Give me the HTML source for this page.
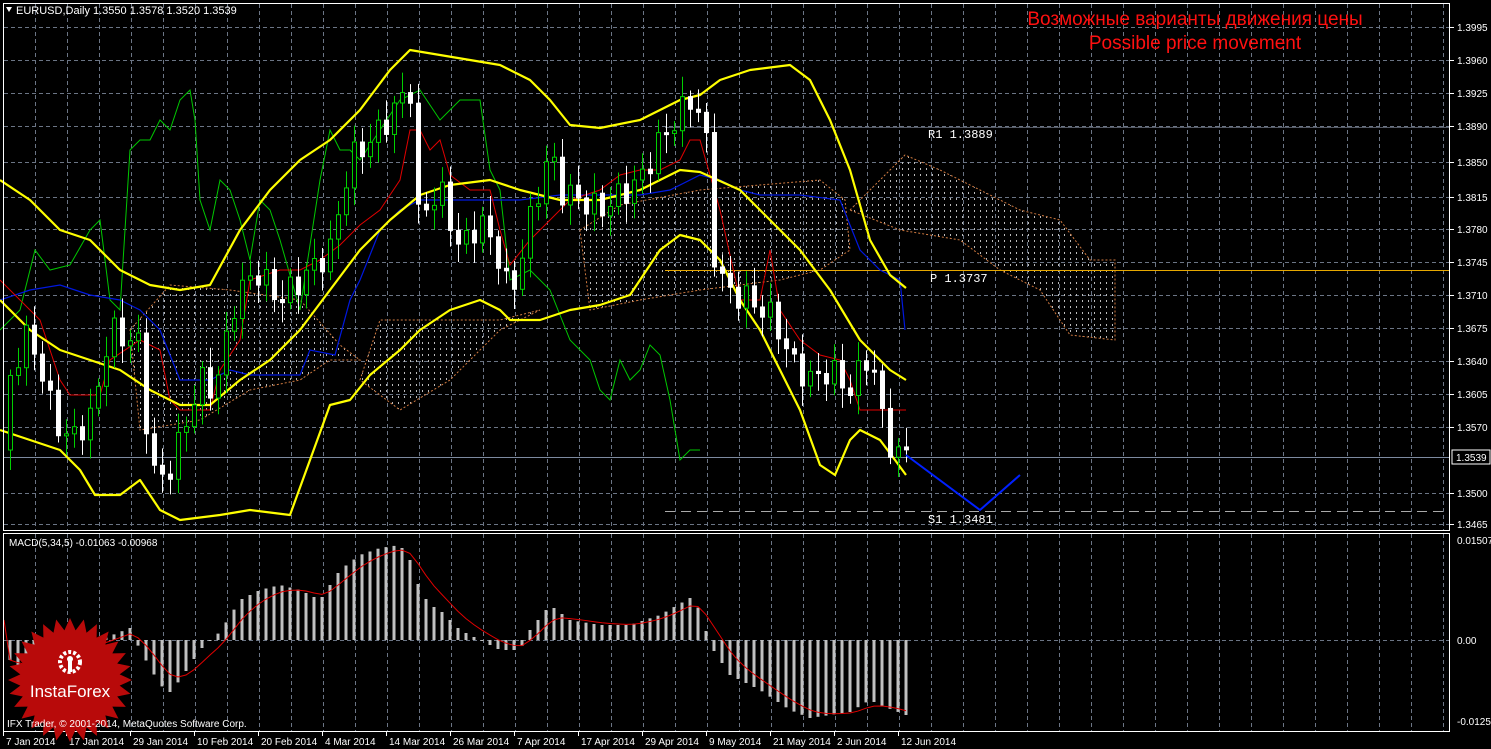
<!DOCTYPE html><html><head><meta charset="utf-8"><style>
html,body{margin:0;padding:0;background:#000;width:1491px;height:749px;overflow:hidden}
svg{display:block}
text{font-family:"Liberation Sans",sans-serif}
</style></head><body>
<svg id="s" width="1491" height="749" xmlns="http://www.w3.org/2000/svg">
<defs>
<pattern id="cl" width="6" height="6" patternUnits="userSpaceOnUse"><rect x="2" y="0" width="1" height="2" fill="#bbb"/></pattern>
</defs>
<rect width="1491" height="749" fill="#000"/>
<g id="grid"></g>
<g id="cloud"></g>
<g id="lines"></g>
<g id="candles"></g>
<g id="macd"></g>
<rect x="3.5" y="3.5" width="1446" height="527" fill="none" stroke="#fff"/>
<rect x="3.5" y="533.5" width="1446" height="198" fill="none" stroke="#fff"/>
<g id="ax"></g>
<polygon points="6,7 12,7 9,12" fill="#fff"/>
<text x="16" y="14" font-size="11" fill="#fff">EURUSD,Daily  1.3550 1.3578 1.3520 1.3539</text>
<text x="1195" y="25" font-size="19" fill="#ff1010" text-anchor="middle">Возможные варианты движения цены</text>
<text x="1195" y="49" font-size="19" fill="#ff1010" text-anchor="middle">Possible price movement</text>
<text x="928" y="138" font-size="12" fill="#fff" style="font-family:'Liberation Mono',monospace">R1 1.3889</text>
<text x="930" y="282" font-size="12" fill="#fff" style="font-family:'Liberation Mono',monospace">P 1.3737</text>
<text x="928" y="523" font-size="12" fill="#fff" style="font-family:'Liberation Mono',monospace">S1 1.3481</text>
<text x="9" y="546" font-size="10" fill="#fff">MACD(5,34,5) -0.01063 -0.00968</text>
<g id="logo"></g>
<text x="7" y="727" font-size="10" fill="#fff">IFX Trader, © 2001-2014, MetaQuotes Software Corp.</text>
</svg>
<script>
var NS="http://www.w3.org/2000/svg";
function el(p,t,a,tx){var e=document.createElementNS(NS,t);for(var k in a)e.setAttribute(k,a[k]);if(tx)e.textContent=tx;document.getElementById(p).appendChild(e);return e;}
function interp(pts,x){for(var i=0;i<pts.length-1;i++){if(x>=pts[i][0]&&x<=pts[i+1][0]){var t=(x-pts[i][0])/(pts[i+1][0]-pts[i][0]);return pts[i][1]+t*(pts[i+1][1]-pts[i][1]);}}return pts[pts.length-1][1];}
function pl(p,pts,c,w,extra){var a={points:pts.map(function(q){return q.join(',')}).join(' '),fill:'none',stroke:c,'stroke-width':w};for(var k in extra)a[k]=extra[k];el(p,'polyline',a);}
for(var x=35;x<1450;x+=32){el('grid','line',{x1:x+.5,y1:4,x2:x+.5,y2:530,stroke:'#6b7585','stroke-dasharray':'4,3'});el('grid','line',{x1:x+.5,y1:534,x2:x+.5,y2:731,stroke:'#6b7585','stroke-dasharray':'4,3'});}
var labs=[["1.3995",27],["1.3960",60],["1.3925",93],["1.3890",126],["1.3850",162],["1.3815",197],["1.3780",229],["1.3745",262],["1.3710",295],["1.3675",328],["1.3640",361],["1.3605",394],["1.3570",427],["1.3500",493],["1.3465",524]];
labs.forEach(function(l){el('grid','line',{x1:4,y1:l[1]+.5,x2:1450,y2:l[1]+.5,stroke:'#6b7585','stroke-dasharray':'4,3'});el('ax','line',{x1:1450,y1:l[1]+.5,x2:1454,y2:l[1]+.5,stroke:'#fff'});el('ax','text',{x:1457,y:l[1]+4,'font-size':10,fill:'#fff'},l[0]);});
el('grid','line',{x1:4,y1:640.5,x2:1450,y2:640.5,stroke:'#6b7585','stroke-dasharray':'4,3'});
[["0.01507",540],["0.00",640],["-0.01252",721]].forEach(function(l){el('ax','text',{x:1457,y:l[1]+4,'font-size':10,fill:'#fff'},l[0]);});
el('ax','rect',{x:1452,y:450,width:38,height:14,fill:'#000',stroke:'#fff'});
el('ax','text',{x:1456,y:461,'font-size':10,fill:'#fff'},"1.3539");
var dates=[["7 Jan 2014",3],["17 Jan 2014",66],["29 Jan 2014",130],["10 Feb 2014",194],["20 Feb 2014",258],["4 Mar 2014",322],["14 Mar 2014",386],["26 Mar 2014",450],["7 Apr 2014",514],["17 Apr 2014",578],["29 Apr 2014",642],["9 May 2014",706],["21 May 2014",770],["2 Jun 2014",834],["12 Jun 2014",898]];
dates.forEach(function(d){el('ax','line',{x1:d[1]+.5,y1:731,x2:d[1]+.5,y2:736,stroke:'#fff'});el('ax','text',{x:d[1]+3,y:745,'font-size':10,fill:'#fff'},d[0]);});
el('lines','line',{x1:4,y1:457.5,x2:1450,y2:457.5,stroke:'#7d8aa0'});
el('lines','line',{x1:665,y1:127.5,x2:1450,y2:127.5,stroke:'#555a66'});
el('lines','line',{x1:665,y1:270.5,x2:1450,y2:270.5,stroke:'#e6a800'});
el('lines','line',{x1:665,y1:511.5,x2:1450,y2:511.5,stroke:'#aaa','stroke-dasharray':'10,6'});
var clouds=[[[130,330],[170,285],[230,290],[300,300],[340,345],[360,360],[330,360],[300,380],[250,390],[200,420],[140,430]],
[[360,380],[380,320],[500,320],[540,310],[500,330],[450,380],[400,410]],
[[580,230],[620,205],[700,190],[760,185],[820,180],[845,200],[850,250],[820,270],[780,280],[700,290],[640,300],[590,310]],
[[850,210],[880,180],[905,155],[940,170],[980,190],[1020,210],[1060,220],[1090,260],[1115,260],[1115,340],[1070,335],[1040,290],[1000,270],[960,240],[900,230]]];
clouds.forEach(function(c){el('cloud','polygon',{points:c.map(function(q){return q.join(',')}).join(' '),fill:'url(#cl)',stroke:'#d07a40','stroke-dasharray':'2,2'});});
var green=[[0,330],[20,310],[35,250],[50,270],[70,265],[90,230],[100,220],[110,300],[120,310],[130,150],[140,140],[150,140],[160,120],[170,130],[180,100],[190,90],[195,120],[200,200],[210,230],[220,180],[230,190],[240,220],[250,260],[260,200],[270,210],[280,240],[300,310],[320,180],[330,130],[340,150],[350,150],[360,160],[380,130],[400,100],[420,90],[440,120],[460,100],[480,100],[490,170],[500,190],[510,280],[530,270],[550,290],[570,340],[590,360],[600,390],[610,400],[620,360],[630,380],[640,370],[650,345],[660,355],[670,400],[680,460],[690,450],[700,450]];
pl('lines',green,'#00c800',1);
var blue=[[0,300],[30,290],[60,285],[90,295],[120,300],[140,310],[160,330],[180,380],[210,380],[230,370],[250,375],[300,375],[310,350],[335,355],[350,300],[360,280],[380,230],[390,220],[400,210],[420,200],[480,200],[520,200],[560,195],[600,195],[640,195],[670,190],[700,175],[720,180],[740,190],[760,195],[800,195],[840,200],[860,250],[880,270],[900,280],[905,330]];
pl('lines',blue,'#0018e0',1.2);
var red=[[0,280],[20,300],[40,320],[60,380],[70,395],[100,395],[110,360],[140,340],[160,350],[170,400],[180,410],[210,410],[220,370],[240,340],[250,280],[280,270],[300,270],[320,260],[340,245],[360,225],[380,210],[400,180],[410,130],[420,130],[430,150],[440,140],[450,175],[470,190],[490,190],[500,230],[510,265],[530,240],[550,220],[570,200],[600,190],[620,175],[640,170],[660,170],[680,160],[690,140],[700,140],[720,210],[740,300],[760,300],[770,250],[780,310],[800,340],[820,355],[840,360],[850,380],[860,410],[880,410],[906,410]];
pl('lines',red,'#e00000',1);
var close=[[8,380],[30,330],[45,390],[65,440],[90,420],[110,330],[140,345],[150,470],[165,480],[180,440],[200,380],[215,390],[235,300],[255,270],[280,300],[300,280],[330,250],[350,160],[380,130],[400,100],[410,90],[415,220],[440,190],[460,250],[480,220],[500,260],[510,300],[530,220],[550,150],[560,190],[600,210],[640,180],[660,140],[690,100],[705,120],[710,240],[725,290],[750,300],[775,320],[790,360],[810,380],[830,370],[850,390],[870,350],[880,410],[895,460],[906,450]];
var prev=interp(close,2);
for(var i=0;i<113;i++){var cx=10+i*8;var c=interp(close,cx)+Math.sin(i*2.3)*14;var o=prev;prev=c;var hi=Math.min(o,c)-6-Math.abs(Math.sin(i*1.7))*14;var lo=Math.max(o,c)+6+Math.abs(Math.cos(i*1.3))*14;
 var up=c<o;el('candles','line',{x1:cx+.5,y1:hi,x2:cx+.5,y2:lo,stroke:up?'#00d000':'#fff'});
 var t=Math.min(o,c),h=Math.max(2,Math.abs(o-c));
 el('candles','rect',{x:cx-1.5,y:t,width:4,height:h,fill:up?'#000':'#fff',stroke:up?'#00d000':'#fff','stroke-width':1});}
var up=[[0,180],[30,200],[60,230],[90,240],[120,270],[150,285],[180,290],[210,285],[240,230],[270,190],[300,160],[330,140],[360,110],[390,70],[410,50],[440,55],[470,60],[500,65],[530,80],[550,100],[570,125],[600,128],[640,120],[680,100],[700,95],[720,80],[750,70],[790,65],[810,80],[830,120],[850,170],[870,240],[890,275],[906,288]];
var mid=[[0,300],[30,330],[60,350],[90,360],[120,370],[150,390],[180,405],[210,405],[240,380],[270,360],[300,330],[330,290],[360,250],[390,220],[420,195],[450,185],[490,180],[520,190],[560,200],[600,200],[640,190],[680,170],[700,172],[740,190],[770,220],[800,250],[830,290],[860,340],[890,370],[906,380]];
var lo=[[0,430],[30,440],[60,450],[80,470],[95,495],[120,495],[140,480],[160,510],[180,520],[220,515],[250,510],[290,515],[310,460],[330,405],[350,400],[370,375],[400,350],[420,330],[450,310],[480,300],[500,310],[510,320],[540,320],[570,310],[600,305],[630,295],[660,250],[680,235],[700,240],[720,260],[740,300],[760,330],[780,370],[800,410],[820,465],[835,475],[850,440],[860,430],[880,440],[895,460],[906,475]];
[up,mid,lo].forEach(function(p){pl('lines',p,'#ffff00',2.2,{'stroke-linejoin':'round'});});
pl('candles',[[906,455],[980,510],[1020,475]],'#0020ff',2);
var mk=[[10,660],[20,670],[35,665],[60,650],[80,645],[100,640],[120,632],[130,628],[140,650],[160,685],[170,692],[180,680],[200,650],[210,640],[220,632],[240,600],[260,590],[280,585],[300,590],[320,600],[340,570],[360,555],[380,548],[400,545],[410,560],[420,590],[430,605],[440,610],[460,630],[480,640],[500,650],[520,650],[530,630],[550,605],[570,620],[600,625],[630,625],[660,615],[690,598],[700,610],[710,645],[730,675],[760,690],[790,710],[810,718],[830,715],[850,712],[870,700],[880,705],[906,715]];
var sig=[],s=660;
for(var i=0;i<113;i++){var cx=10+i*8;var v=interp(mk,cx);var y0=640;el('macd','rect',{x:cx-1.5,y:Math.min(v,y0),width:3,height:Math.max(1,Math.abs(v-y0)),fill:'#c0c0c0'});s=s+(v-s)/3;sig.push([cx,s]);}
pl('macd',[[4,620]].concat(sig),'#e00000',1);
var pts=[];for(var i=0;i<56;i++){var a=i*Math.PI/28;var r=i%2?50:62;pts.push([70+r*Math.cos(a),680+r*Math.sin(a)]);}
el('logo','polygon',{points:pts.map(function(q){return q.join(',')}).join(' '),fill:'#b80a0a'});
el('logo','circle',{cx:70,cy:662,r:10,fill:'none',stroke:'#fff','stroke-width':4,'stroke-dasharray':'3,2'});
el('logo','circle',{cx:70,cy:659,r:3,fill:'#fff'});
el('logo','rect',{x:68,y:660,width:4,height:12,fill:'#fff'});
el('logo','text',{x:70,y:697,'font-size':17,fill:'#fff','text-anchor':'middle'},'InstaForex');
</script>
</body></html>
